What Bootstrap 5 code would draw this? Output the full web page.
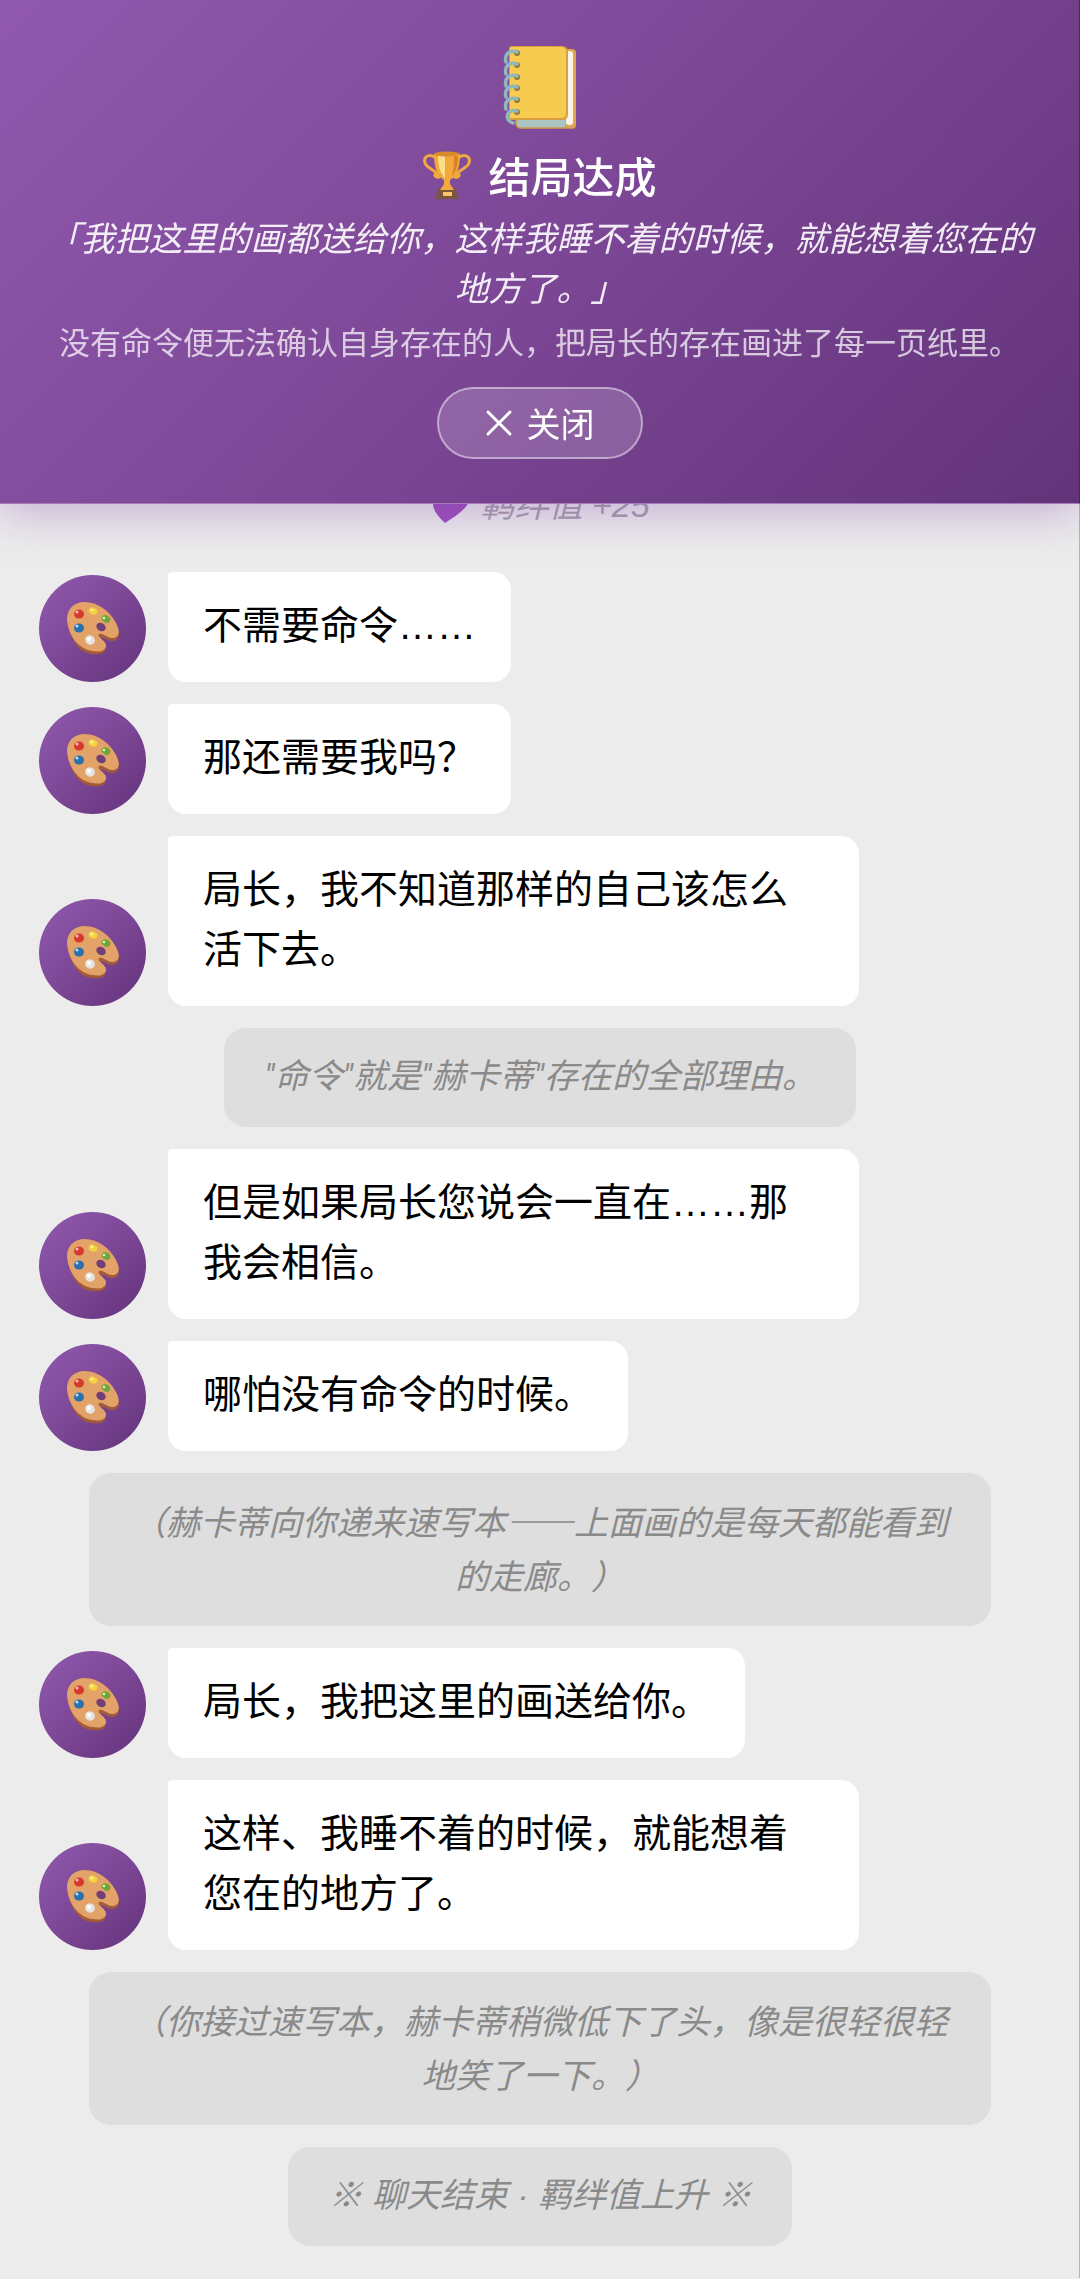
<!DOCTYPE html>
<html lang="zh-CN">
<head>
<meta charset="utf-8">
<meta name="viewport" content="width=device-width, initial-scale=1">
<title>结局达成</title>
<link href="https://cdn.jsdelivr.net/npm/bootstrap@5.3.0/dist/css/bootstrap.min.css" rel="stylesheet">
<style>
  :root { --violet: linear-gradient(135deg, #9059ae 0%, #7f4999 45%, #63337a 100%); }
  body {
    background: #ececec;
    color: #000;
    font-family: "Noto Sans CJK SC", "Noto Sans", sans-serif;
    text-spacing-trim: space-all;
  }
  .ending-banner {
    background: var(--violet);
    color: #fff;
    padding: 45px 40px 44px;
    border-bottom: 1px solid #a67bb8;
    border-right: 1px solid #4d2660;
    box-shadow: 0 8px 44px rgba(126, 60, 170, .36);
  }
  .book-icon { width: 74px; height: 84px; }
  .cup-icon { width: 50px; height: 50px; }
  .ending-title { font-size: 42px; line-height: 50px; font-weight: 500; margin: 21px 0 12px; gap: 16px; }
  .ending-quote { font-size: 34px; line-height: 50px; font-style: italic; color: rgba(255, 255, 255, .9); margin: 0 0 7px; }
  .ending-desc { font-size: 31px; line-height: 44px; color: rgba(255, 255, 255, .72); margin: 0 0 24px; }
  .close-btn {
    font-size: 34px; line-height: 48px; color: #fff;
    padding: 10px 46px; gap: 14px;
    background: rgba(255, 255, 255, .17);
    border: 2px solid rgba(255, 255, 255, .45);
  }
  .close-btn:hover { color: #fff; background: rgba(255, 255, 255, .25); }
  .close-icon { width: 28px; height: 28px; }
  .chat-log { padding: 457px 38px 32px 39px; gap: 22px; border-right: 1px solid #b4b4b4; }
  .msg-row { gap: 22px; }
  .avatar { width: 107px; height: 107px; background: var(--violet); }
  .avatar svg { width: 56px; height: 56px; }
  .bubble {
    max-width: 69%; background: #fff; border-radius: 4px 18px 18px 18px;
    font-size: 39px; line-height: 60px; padding: 20px 35px 30px;
  }
  .dots { font-family: "Liberation Sans", sans-serif; line-height: 1; }
  .narration {
    max-width: 90%; background: #dedede; color: #8a8a8a; border-radius: 22px;
    font-size: 34px; line-height: 54px; font-style: italic; padding: 21px 40px 24px;
  }
  .narration.quoted { font-family: Roboto, "Noto Sans CJK SC", sans-serif; }
  .narration.mixed { font-family: "Liberation Sans", "Noto Sans CJK SC", sans-serif; }
  .narration.plain { background: transparent; color: #a5a1a8; padding-bottom: 18px; }
  .heart-icon { width: 42px; height: 38px; }
</style>
<script src="https://cdn.jsdelivr.net/npm/bootstrap@5.3.0/dist/js/bootstrap.bundle.min.js"></script>
</head>
<body>

<svg class="d-none" aria-hidden="true">
  <symbol id="palette" viewBox="0 0 56 56">
    <path d="M3 20C2 9 10 3 21 3c12 0 25 9 31 22 3 7 3 13-3 15-6 1-11-5-15-3-4 3 7 6 7 10 0 6-8 7-15 6C13 51 4 37 3 20Z" fill="#a35a3a"/>
    <path d="M2 18C2 8 9 1 20 1c12 0 25 9 31 21 4 8 4 13-2 15-6 1-11-6-15-4-3 3 8 7 7 12-1 6-8 6-14 5C14 48 3 35 2 18Z" fill="#e3a267"/>
    <ellipse cx="36" cy="26" rx="5" ry="4" fill="#713e78" transform="rotate(35 36 26)"/>
    <ellipse cx="14" cy="13" rx="5" ry="4.500" fill="#d63a2c"/><circle cx="12" cy="11" r="1.500" fill="#fbb"/>
    <ellipse cx="28" cy="10" rx="4.500" ry="3.500" fill="#f5d23c" transform="rotate(20 28 10)"/><circle cx="27" cy="9" r="1.300" fill="#fff6bb"/>
    <ellipse cx="41" cy="18" rx="4.500" ry="3.500" fill="#6fa63c" transform="rotate(30 41 18)"/><circle cx="39" cy="17" r="1.300" fill="#dcf3bd"/>
    <ellipse cx="14" cy="27" rx="5" ry="4.500" fill="#2a6fae"/><circle cx="12" cy="25" r="1.500" fill="#b9dcf7"/>
    <ellipse cx="25" cy="39" rx="5" ry="4.500" fill="#e6e4e2" transform="rotate(30 25 39)"/><circle cx="24" cy="38" r="2" fill="#fff"/>
  </symbol>
</svg>

<header class="ending-banner fixed-top d-flex flex-column align-items-center text-center">
  <svg class="book-icon" viewBox="0 0 74 84" aria-hidden="true">
    <path d="M13 70h59v11q0 2-2 2H17q-4-1-4-5Z" fill="#a9c4c1" stroke="#d49b45" stroke-width="1.500"/>
    <path d="M62 4h7q4 0 4 4v70q0 4-4 4h-7Z" fill="#e0a64b"/>
    <rect x="63" y="6" width="7" height="74" rx="3" fill="#fbf5ec"/>
    <path d="M6 4q0-3 3-3h50q6 0 6 6v62q0 6-6 6H6Z" fill="#d8a03c"/>
    <path d="M7 4q0-2 3-2h48q5 0 5 5v61q0 5-5 5H7Z" fill="#f6cb4f"/>
    <g fill="#8d7b36"><circle cx="14" cy="8" r="3"/><circle cx="14" cy="20" r="3"/><circle cx="14" cy="32" r="3"/><circle cx="14" cy="43" r="3"/><circle cx="14" cy="55" r="3"/><circle cx="14" cy="67" r="3"/></g>
    <g fill="none" stroke="#8fb9bd" stroke-width="3.500" stroke-linecap="round">
      <path d="M14 7C6 4 1 10 3 17"/><path d="M14 19C6 16 1 22 3 29"/><path d="M14 31C6 28 1 34 3 41"/><path d="M14 42C6 39 1 45 3 52"/><path d="M14 54C6 51 1 57 3 64"/><path d="M14 66C4 63 0 75 10 78"/>
    </g>
  </svg>
  <h1 class="ending-title d-flex align-items-center">
    <svg class="cup-icon" viewBox="0 0 50 50" aria-hidden="true">
      <g fill="none" stroke="#f0a93c" stroke-width="3">
        <path d="M14 8C8 3 1 6 3 13c2 6 11 6 14 14-4 1-5-2-3-4"/>
        <path d="M36 8c6-5 13-2 11 5-2 6-11 6-14 14 4 1 5-2 3-4"/>
      </g>
      <path d="M17 38h16l4 11H13Z" fill="#7a5640"/>
      <path d="M12 4q13-4 26 0c0 13-3 22-10 26v4l4 6H18l4-6v-4C15 26 12 17 12 4Z" fill="#f2a83b"/>
      <path d="M16 6q4-1 7-1v23c-5-5-7-12-7-22Z" fill="#fbe08a"/>
      <path d="M32 6q3 0 4 1c0 8-2 15-6 19 2-7 2-13 2-20Z" fill="#d98324"/>
      <ellipse cx="25" cy="4" rx="13" ry="2.500" fill="#d98a2c"/>
      <rect x="21" y="42" width="9" height="4" fill="#f7c765"/>
    </svg>
    <span>结局达成</span>
  </h1>
  <p class="ending-quote">「我把这里的画都送给你，这样我睡不着的时候，就能想着您在的地方了。」</p>
  <p class="ending-desc">没有命令便无法确认自身存在的人，把局长的存在画进了每一页纸里。</p>
  <button type="button" class="close-btn btn rounded-pill d-inline-flex align-items-center">
    <svg class="close-icon" viewBox="0 0 28 28" fill="none" stroke="currentColor" stroke-width="3" stroke-linecap="round" aria-hidden="true"><path d="M3 3l22 22M25 3 3 25"/></svg>
    <span>关闭</span>
  </button>
</header>

<main class="chat-log d-flex flex-column">
  <div class="narration mixed plain align-self-center d-flex align-items-center gap-2">
    <svg class="heart-icon" viewBox="0 0 42 38" aria-hidden="true"><path d="M15 37C5 28 1 21 4 11 7 2 18 1 22 9 28 1 39 2 40 11 40 21 26 30 15 37Z" fill="#9b4fb8"/></svg>
    <span>羁绊值 +25</span>
  </div>
  <div class="msg-row d-flex align-items-end">
    <div class="avatar rounded-circle flex-shrink-0 d-flex align-items-center justify-content-center"><svg aria-hidden="true"><use href="#palette"/></svg></div>
    <div class="bubble">不需要命令<span class="dots">……</span></div>
  </div>
  <div class="msg-row d-flex align-items-end">
    <div class="avatar rounded-circle flex-shrink-0 d-flex align-items-center justify-content-center"><svg aria-hidden="true"><use href="#palette"/></svg></div>
    <div class="bubble">那还需要我吗？</div>
  </div>
  <div class="msg-row d-flex align-items-end">
    <div class="avatar rounded-circle flex-shrink-0 d-flex align-items-center justify-content-center"><svg aria-hidden="true"><use href="#palette"/></svg></div>
    <div class="bubble">局长，我不知道那样的自己该怎么活下去。</div>
  </div>
  <div class="narration quoted align-self-center text-center">"命令"就是"赫卡蒂"存在的全部理由。</div>
  <div class="msg-row d-flex align-items-end">
    <div class="avatar rounded-circle flex-shrink-0 d-flex align-items-center justify-content-center"><svg aria-hidden="true"><use href="#palette"/></svg></div>
    <div class="bubble">但是如果局长您说会一直在<span class="dots">……</span>那我会相信。</div>
  </div>
  <div class="msg-row d-flex align-items-end">
    <div class="avatar rounded-circle flex-shrink-0 d-flex align-items-center justify-content-center"><svg aria-hidden="true"><use href="#palette"/></svg></div>
    <div class="bubble">哪怕没有命令的时候。</div>
  </div>
  <div class="narration align-self-center text-center">（赫卡蒂向你递来速写本——上面画的是每天都能看到的走廊。）</div>
  <div class="msg-row d-flex align-items-end">
    <div class="avatar rounded-circle flex-shrink-0 d-flex align-items-center justify-content-center"><svg aria-hidden="true"><use href="#palette"/></svg></div>
    <div class="bubble">局长，我把这里的画送给你。</div>
  </div>
  <div class="msg-row d-flex align-items-end">
    <div class="avatar rounded-circle flex-shrink-0 d-flex align-items-center justify-content-center"><svg aria-hidden="true"><use href="#palette"/></svg></div>
    <div class="bubble">这样、我睡不着的时候，就能想着您在的地方了。</div>
  </div>
  <div class="narration align-self-center text-center">（你接过速写本，赫卡蒂稍微低下了头，像是很轻很轻地笑了一下。）</div>
  <div class="narration mixed align-self-center text-center">※ 聊天结束 · 羁绊值上升 ※</div>
</main>
</body>
</html>
